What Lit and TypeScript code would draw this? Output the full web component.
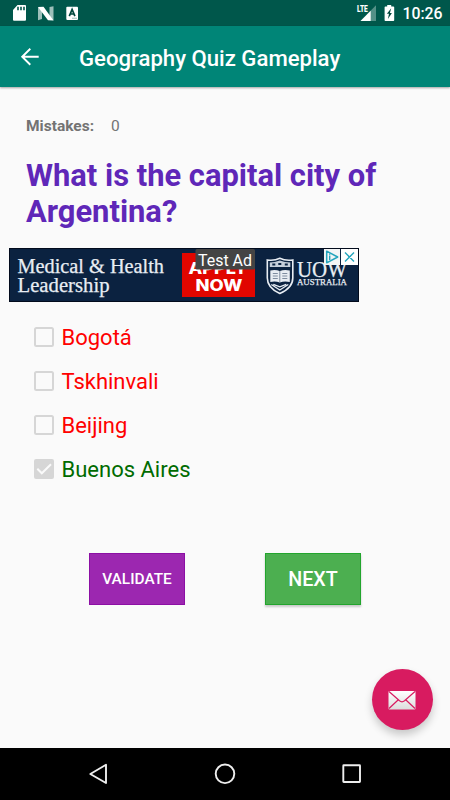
import { LitElement, html, svg, css } from "lit";
import { customElement, property } from "lit/decorators.js";
import { classMap } from "lit/directives/class-map.js";

@customElement("status-bar")
class StatusBar extends LitElement {
  static styles = css`
    :host { display: flex; height: 26px; background: #00574b; color: #fff; }
    svg { display: block; }
    .left { width: 90px; }
    .right { margin-left: auto; width: 48px; }
    .time { width: 47.500px; font: 500 15.800px/28px Roboto, sans-serif; white-space: nowrap; }
    .lte { font: 900 8.800px Roboto, sans-serif; fill: #fff; }
  `;
  render() {
    return html`
      <svg class="left" width="90" height="26" viewBox="0 0 90 26">
        <path fill="#fff" fill-rule="evenodd" d="M17.500 5H25q1 0 1 1v13.800q0 1-1 1H14q-1 0-1-1V10zM17.200 6.800v3.400h1.600V6.800zM20.200 6.800v3.400h1.600V6.800zM23.200 6.800v3.400h1.600V6.800z"/>
        <path fill="#9dbfba" d="M38 7l4 2v10l-4 1.300zM49.500 7l4-.700v14.200l-4-2z"/>
        <path fill="#fff" d="M38 7l5.500-.300 10 13.700-5.500-.200z"/>
        <rect x="66.300" y="6.800" width="11.700" height="13.200" rx="1" fill="#fff"/>
        <path d="M69.300 16.200l2.800-6.700 2.800 6.700M70.300 14h3.600" fill="none" stroke="#00473d" stroke-width="1.700"/>
        <path d="M72 18.300h5" stroke="#b3ceca" stroke-width="1.300"/>
      </svg>
      <svg class="right" width="48" height="26" viewBox="0 0 48 26">
        <path fill="#549087" d="M21 5.300V21H5.500z"/>
        <path fill="#fff" d="M15.700 10.700V21H5.500z"/>
        <rect x="1.500" y="4.800" width="11.500" height="7.600" fill="#00574b"/>
        <text class="lte" x="2" y="11.800" textLength="10.800" lengthAdjust="spacingAndGlyphs">LTE</text>
        <path fill="#fff" d="M32.500 5h4v1.500h2.200q.8 0 .8.800v13q0 .8-.8.800h-8q-.8 0-.8-.8v-13q0-.8.8-.8h1.800z" transform="translate(-.3)"/>
        <path fill="#00473d" d="M36.700 8.300l-4.300 5.500h2.100L33.400 19l4-5.900h-2z" transform="translate(-.5)"/>
      </svg>
      <div class="time">10:26</div>`;
  }
}

@customElement("app-bar")
class AppBar extends LitElement {
  static styles = css`
    :host { display: flex; align-items: center; height: 61px; background: #008577; color: #fff; box-shadow: 0 1px 2px rgba(0,0,0,.35); padding-left: 18px; position: relative; box-sizing: border-box; }
    h1 { margin: 0 0 0 37px; font: 500 22.150px/30px Roboto, sans-serif; padding-top: 2px; white-space: nowrap; }
  `;
  render() {
    return html`
      <svg width="24" height="24" viewBox="0 0 24 24"><path d="M20.700 11.700H4M12.300 3.700L4.200 11.700l8.100 8" fill="none" stroke="#fff" stroke-width="1.900"/></svg>
      <h1>Geography Quiz Gameplay</h1>`;
  }
}

@customElement("ad-banner")
class AdBanner extends LitElement {
  static styles = css`
    :host { display: block; width: 350px; height: 54px; }
    svg { display: block; }
    .serif { font-family: "Liberation Serif", serif; fill: #e8edf3; stroke: #e8edf3; stroke-width: .25px; }
    .cta { font: 800 15.500px Inter, sans-serif; fill: #fff; }
    .tag { font: 400 17.200px Roboto, sans-serif; fill: #fff; }
  `;
  render() {
    return html`
      <svg width="350" height="54" viewBox="0 0 350 54">
        <rect width="350" height="54" fill="#020b1c"/>
        <rect x="1" y="1" width="348" height="52" fill="#0b2240"/>
        <text class="serif" x="8.500" y="24.500" font-size="20" textLength="146.500" lengthAdjust="spacingAndGlyphs">Medical &amp; Health</text>
        <text class="serif" x="8.500" y="44" font-size="20" textLength="92" lengthAdjust="spacingAndGlyphs">Leadership</text>
        <rect x="173" y="5" width="73" height="44" fill="#e10600"/>
        <text class="cta" x="179.500" y="25.500" textLength="59" lengthAdjust="spacingAndGlyphs">APPLY</text>
        <text class="cta" x="186.500" y="42.800" textLength="47" lengthAdjust="spacingAndGlyphs">NOW</text>
        <rect x="186.500" y="1" width="59.500" height="20.500" rx="1.500" fill="#444"/>
        <text class="tag" x="189" y="18" textLength="54" lengthAdjust="spacingAndGlyphs">Test Ad</text>
        <g fill="none" stroke="#e8edf3" transform="translate(.3 -1)">
          <path d="M258 13q7 1 12.500-1.700Q276 14 283.500 13v18q0 10-13 15.500Q258 41 258 31z" stroke-width="1.600"/>
          <path d="M260.500 15.500q5 0 10-2 5 2 10.500 2v4.500h-20.500z" fill="#c5ced9" stroke="none"/>
          <path d="M263 17.500h3M269 17h3M275.500 17.500h3" stroke="#0b2240" stroke-width="1.800"/>
          <path d="M261 23.500q5-1.500 9.500.6 4.500-2.100 10-.6v11.500q-5.500-1.500-10 .6-4.500-2.100-9.500-.6z" fill="#e8edf3" stroke="none"/>
          <path d="M270.500 24v11M263.500 26.500h5M263.500 29h5M263.500 31.500h5M273 26.500h5M273 29h5M273 31.500h5" stroke="#50627a" stroke-width=".7"/>
          <path d="M262 37.500l8.500 5.500 8.500-5.500M264 37.300l6.500 2.500 6.500-2.500" stroke-width="1.300"/>
        </g>
        <text class="serif" x="288" y="28.500" font-size="23" textLength="50" lengthAdjust="spacingAndGlyphs">UOW</text>
        <text class="serif" x="288" y="37" font-size="8.800" textLength="50" lengthAdjust="spacingAndGlyphs">AUSTRALIA</text>
        <rect x="315" y="1" width="16" height="16" fill="#f3f5f6"/>
        <rect x="332" y="1" width="17" height="16" fill="#fff"/>
        <path d="M317.700 3.200v11.600L328.700 9z" fill="none" stroke="#23a5bd" stroke-width="1.500" stroke-linejoin="round"/>
        <path d="M320.700 7.500v4.500M320.700 5.500v1.200M336 4.500l9 9M345 4.500l-9 9" fill="none" stroke="#23a5bd" stroke-width="1.400"/>
      </svg>`;
  }
}

@customElement("quiz-option")
class QuizOption extends LitElement {
  @property() label = "";
  @property({ type: Boolean }) correct = false;
  static styles = css`
    :host { display: flex; align-items: center; height: 43.800px; }
    svg { flex: none; margin-right: 7.500px; }
    .text { font: 400 22px/30px Roboto, sans-serif; color: #f00; white-space: nowrap; padding-top: 2px; }
    .text.correct { color: #006b00; }
  `;
  render() {
    return html`
      <svg width="20" height="20" viewBox="0 0 20 20">
        ${this.correct
          ? svg`<rect width="20" height="20" rx="2" fill="#d6d6d6"/><path d="M3.300 9.800l4.500 4.500L17 5.200" fill="none" stroke="#fafafa" stroke-width="2"/>`
          : svg`<rect x="1" y="1" width="18" height="18" rx="1.500" fill="none" stroke="#d6d6d6" stroke-width="2"/>`}
      </svg>
      <span class=${classMap({ text: true, correct: this.correct })}>${this.label}</span>`;
  }
}

@customElement("app-root")
class AppRoot extends LitElement {
  static styles = css`
    :host { display: flex; flex-direction: column; width: 450px; height: 800px; background: #fafafa; font-family: Roboto, sans-serif; overflow: hidden; position: relative; }
    .score { display: flex; gap: 17px; margin: 29px 0 0 26px; font-size: 15.500px; line-height: 20px; color: #737373; }
    .score b { font-weight: 700; }
    .question { margin: 22px 0 0 26px; font-size: 30.900px; line-height: 36px; font-weight: 700; color: #5f27b8; white-space: nowrap; }
    ad-banner { margin: 18px 0 0 9px; }
    .options { margin: 13.500px 0 0 34px; }
    .actions { display: flex; gap: 80px; margin: 62.300px 0 0 89px; }
    button { width: 96px; height: 52px; padding: 1px 0 0; border: 1px solid; color: #fff; font-family: Roboto, sans-serif; font-weight: 500; }
    .validate { background: #9c27b0; border-color: #8c0fa4; font-size: 15.400px; }
    .next { background: #4caf50; border-color: #22a52d; font-size: 19.700px; box-shadow: 0 2px 2px rgba(0,0,0,.2); }
    .nav { display: flex; height: 52px; margin-top: auto; background: #000; }
    .fab { position: absolute; right: 17.500px; bottom: 70px; width: 61px; height: 61px; border-radius: 50%; background: #d81b60; display: grid; place-items: center; box-shadow: 0 5px 9px rgba(0,0,0,.2); }
  `;
  render() {
    const options = ["Bogotá", "Tskhinvali", "Beijing", "Buenos Aires"];
    return html`
      <status-bar></status-bar>
      <app-bar></app-bar>
      <div class="score"><b>Mistakes:</b><span>0</span></div>
      <div class="question">What is the capital city of<br>Argentina?</div>
      <ad-banner></ad-banner>
      <div class="options">
        ${options.map((o, i) => html`<quiz-option .label=${o} .correct=${i === 3}></quiz-option>`)}
      </div>
      <div class="actions"><button class="validate">VALIDATE</button><button class="next">NEXT</button></div>
      <div class="nav">
        <svg width="450" height="52" viewBox="0 0 450 52" fill="none" stroke="#eee" stroke-width="1.900" stroke-linejoin="round">
          <path d="M106 16.800v18.200L90.300 26z"/>
          <circle cx="225" cy="25.800" r="9.300"/>
          <rect x="343.300" y="17.300" width="16.700" height="16.700" rx=".5"/>
        </svg>
      </div>
      <div class="fab">
        <svg width="28" height="20" viewBox="0 0 28 20">
          <defs><linearGradient id="paper" x1="0" y1="0" x2="0" y2="1"><stop offset="0" stop-color="#fff"/><stop offset="1" stop-color="#dcdcdc"/></linearGradient></defs>
          <rect x=".5" y="1" width="27" height="18.500" rx="1" fill="url(#paper)"/>
          <path d="M1 1.500l10.500 9.300q2.500 2 5 0L27 1.500M1 18.500l9.300-8.700M27 18.500l-9.300-8.700" fill="none" stroke="#d81b60" stroke-width="1.200"/>
        </svg>
      </div>`;
  }
}
